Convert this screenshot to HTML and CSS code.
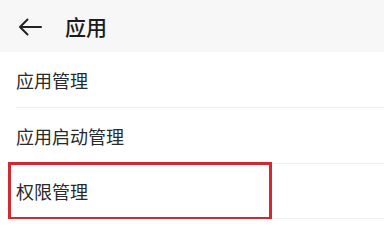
FILE: index.html
```html
<!DOCTYPE html>
<html lang="zh-CN">
<head>
    <meta charset="UTF-8">
    <meta name="viewport" content="width=device-width, initial-scale=1.0">
    <title>应用</title>
    <link rel="stylesheet" href="styles.css">
</head>
<body>
    <div class="header">
        <svg class="back" width="24" height="18" viewBox="0 0 24 18">
            <path d="M23 9H2M9.5 1.5L2 9l7.5 7.5" fill="none" stroke="#222" stroke-width="2" stroke-linecap="round" stroke-linejoin="round"/>
        </svg>
        <h1>应用</h1>
    </div>

    <ul class="list">
        <li>应用管理</li>
        <li>应用启动管理</li>
        <li class="marked">权限管理
            <span class="highlight"></span>
        </li>
    </ul>
</body>
</html>
```

FILE: styles.css
```css
* {
    margin: 0;
    padding: 0;
    box-sizing: border-box;
}

body {
    font-family: "Noto Sans CJK SC", "Noto Sans", sans-serif;
    background: #ffffff;
    color: #222;
}

.header {
    height: 52px;
    background: #f7f7f7;
    display: flex;
    align-items: center;
    padding-left: 18px;
}

.back {
    display: block;
    margin-top: 2px;
}

.header h1 {
    font-size: 21px;
    font-weight: 500;
    margin-left: 23px;
    color: #1c1c1c;
}

.list {
    list-style: none;
}

.list li {
    height: 56px;
    margin-left: 16px;
    border-bottom: 1px solid #eeeeee;
    display: flex;
    align-items: center;
    font-size: 18px;
    color: #2a2a2a;
}

.list li.marked {
    position: relative;
    height: 55px;
}

/* red marker round the last row */
.highlight {
    position: absolute;
    left: -8px;
    top: -2px;
    width: 264px;
    height: 58px;
    border: 3px solid #d8262e;
}
```
